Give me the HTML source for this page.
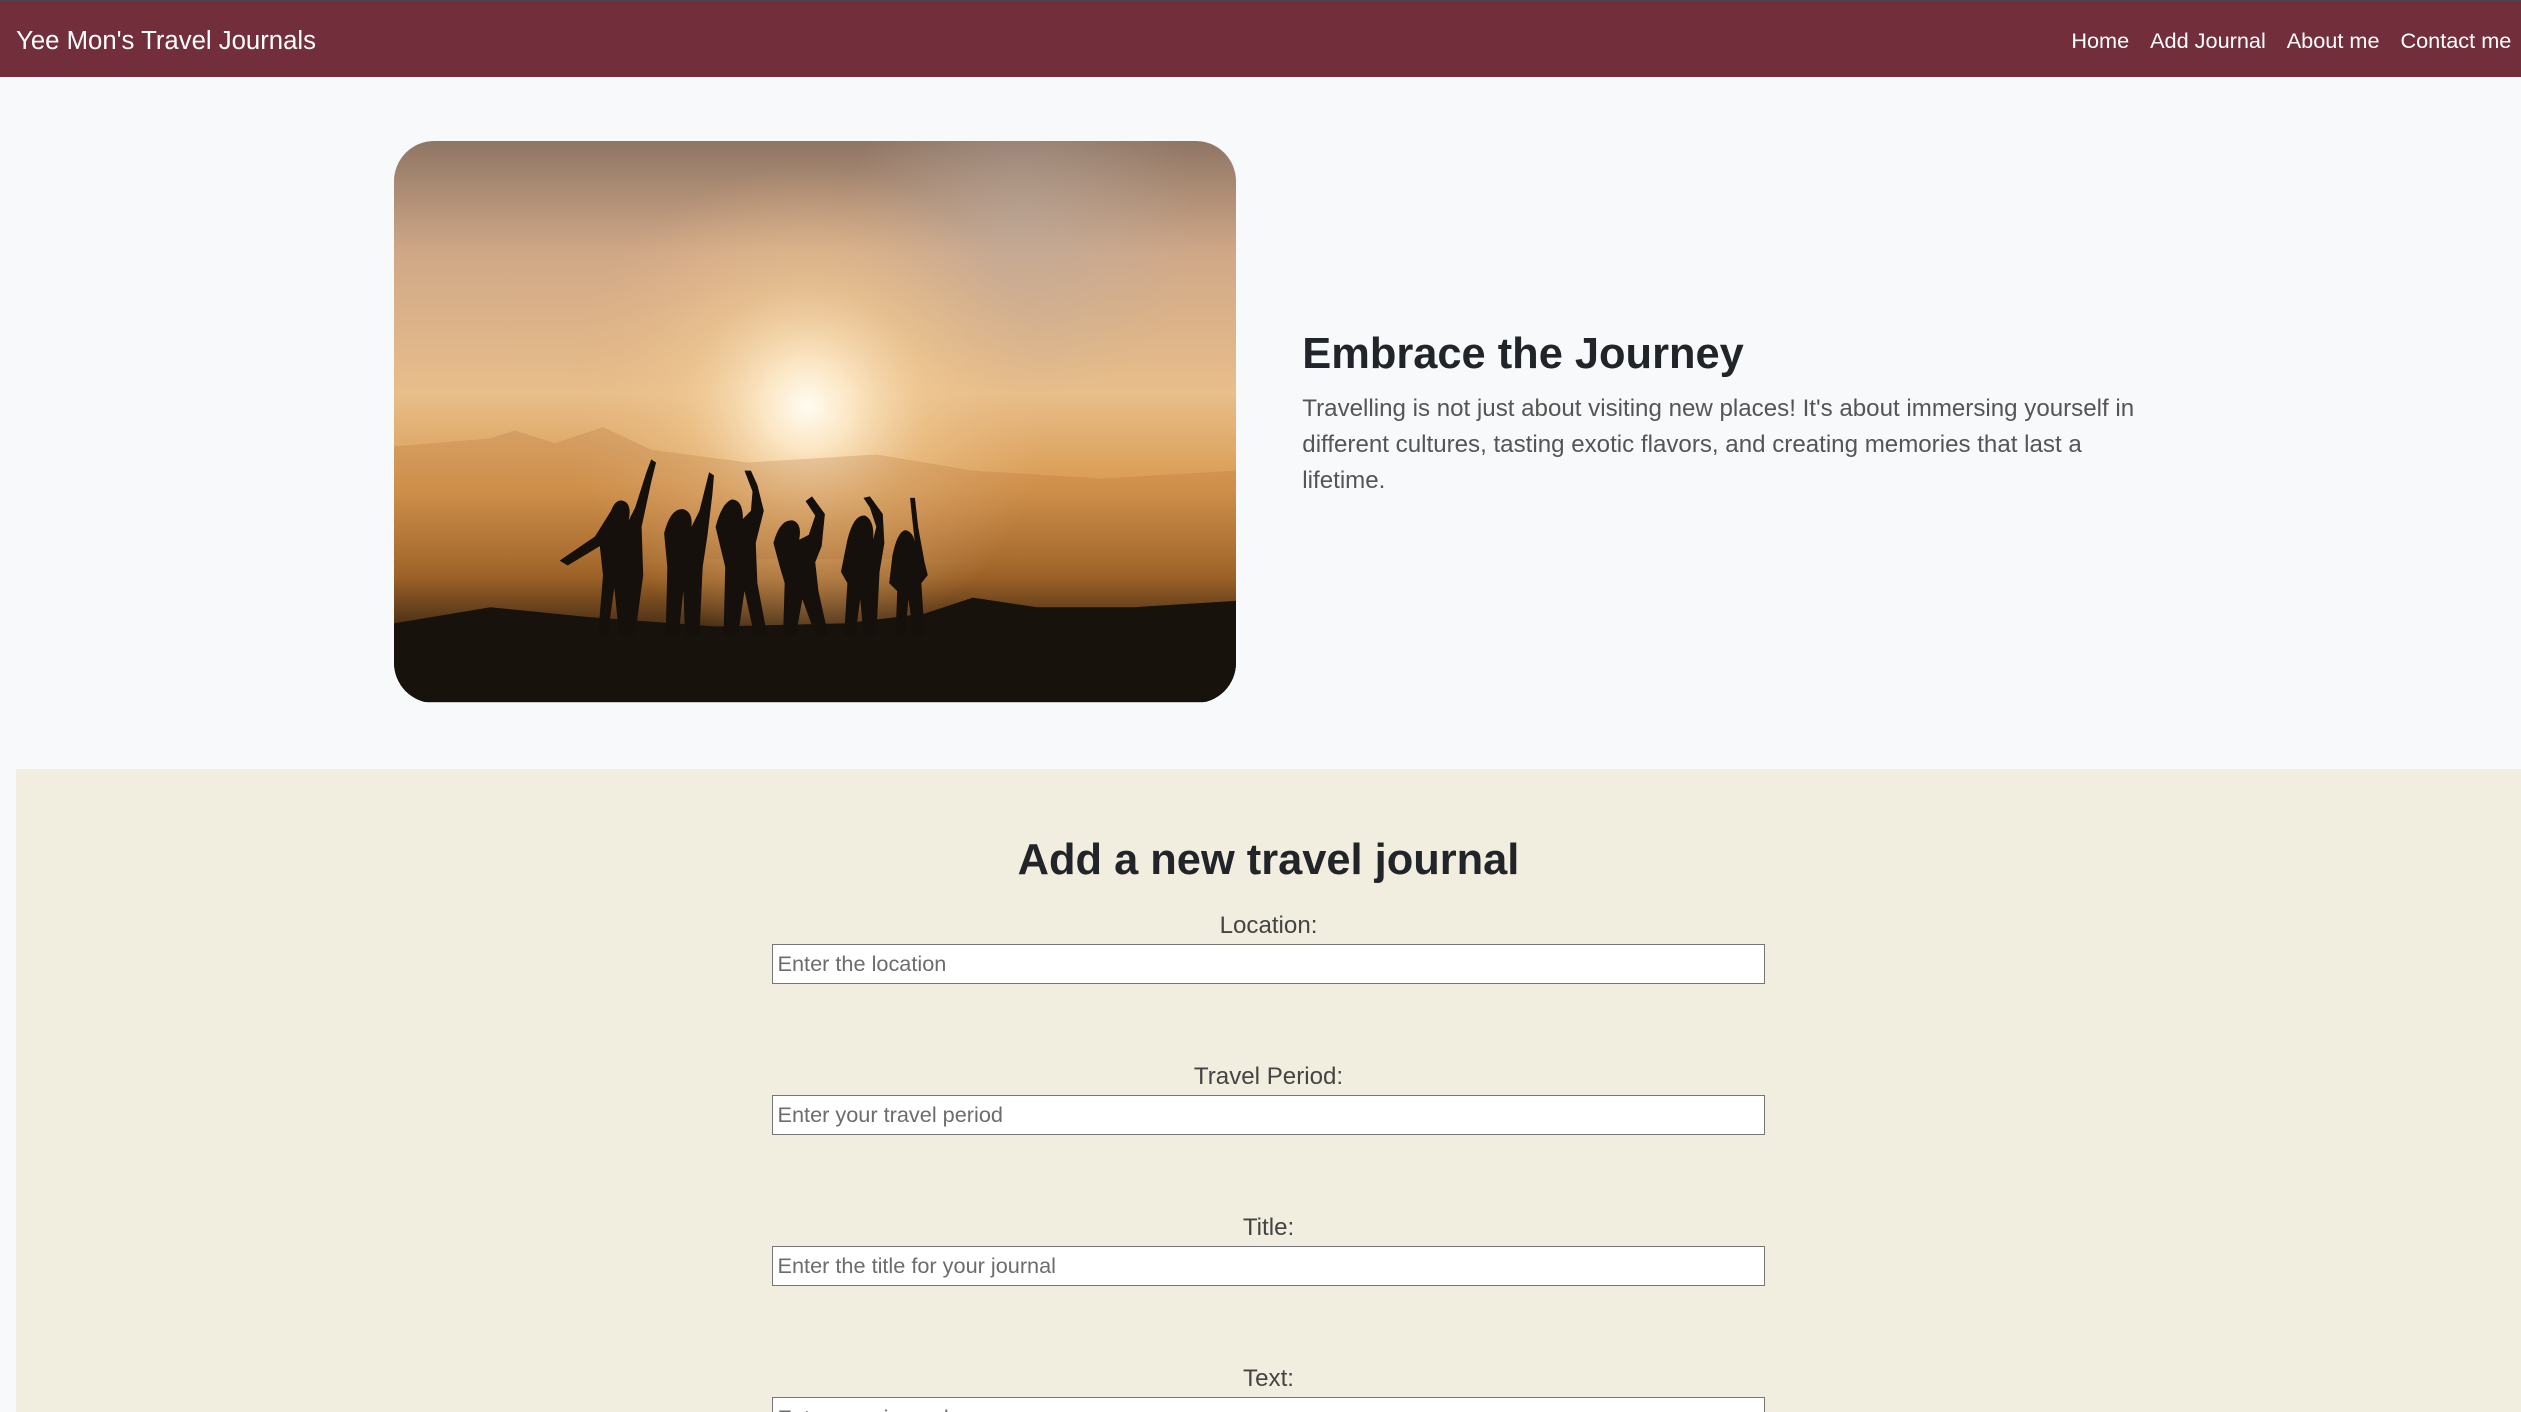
<!DOCTYPE html>
<html><head><meta charset="utf-8"><style>
html,body{margin:0;padding:0;background:#f8f9fa;overflow:hidden}
#w{width:1568px;height:878px;zoom:1.60778;position:relative;font-family:"Liberation Sans",sans-serif;background:#f8f9fa;overflow:hidden}
.nav{position:absolute;left:0;top:0;width:1568px;height:48px;background:#722e3a;border-top:1px solid #4a4450;box-sizing:border-box;color:#fff}
.brand{position:absolute;left:10px;top:16px;font-size:16px}
.links{position:absolute;right:6px;top:17px;font-size:13.5px}
.links span{margin-left:13px}
.img{position:absolute;left:245px;top:88px;width:524px;height:349px;border-radius:25px;overflow:hidden}
h1{position:absolute;left:810px;top:205px;margin:0;font-size:27px;font-weight:bold;color:#212529;font-family:"Liberation Sans",sans-serif}
.p{position:absolute;left:810px;top:243px;width:540px;font-size:15px;line-height:22.6px;color:#555}
.sec{position:absolute;left:10px;top:478px;width:1558px;height:400px;background:#f2eedf}
h2{position:absolute;left:0;width:1558px;text-align:center;top:42px;margin:0;font-size:27px;font-family:"Liberation Sans",sans-serif;color:#212529}
.lab{position:absolute;left:0;width:1558px;text-align:center;font-size:15px;color:#444}
.in{position:absolute;left:470px;width:618px;height:25px;box-sizing:border-box;background:#fff;border:1px solid #767676;font-size:13.5px;color:#6c6c6c;padding:4px 3px;font-family:"Liberation Sans",sans-serif}
</style></head><body><div id="w">
<div class="nav"><div class="brand">Yee Mon's Travel Journals</div><div class="links"><span>Home</span><span>Add Journal</span><span>About me</span><span>Contact me</span></div></div>
<div class="img"><svg width="524" height="349" viewBox="0 0 524 349">
<defs>
<linearGradient id="sky" x1="0" y1="0" x2="0" y2="1">
<stop offset="0" stop-color="#8f7564"/><stop offset="0.2" stop-color="#d0a888"/><stop offset="0.45" stop-color="#e8be8a"/><stop offset="0.62" stop-color="#d99a50"/><stop offset="0.78" stop-color="#9a6026"/><stop offset="0.9" stop-color="#2a1d10"/><stop offset="1" stop-color="#15110c"/></linearGradient>
<radialGradient id="sun" cx="257" cy="165" r="150" gradientUnits="userSpaceOnUse">
<stop offset="0" stop-color="#fffcf2"/><stop offset="0.18" stop-color="#fde9c8" stop-opacity="0.95"/><stop offset="0.5" stop-color="#f2cc96" stop-opacity="0.5"/><stop offset="1" stop-color="#e6b684" stop-opacity="0"/></radialGradient>
<radialGradient id="cl" cx="390" cy="50" r="110" gradientUnits="userSpaceOnUse"><stop offset="0" stop-color="#b8aca4" stop-opacity=".5"/><stop offset="1" stop-color="#b8aca4" stop-opacity="0"/></radialGradient>
</defs>
<rect width="524" height="349" fill="url(#sky)"/>
<rect width="524" height="349" fill="url(#cl)"/>
<rect width="524" height="349" fill="url(#sun)"/>
<path d="M0 190 L60 185 L75 180 L100 188 L130 178 L160 192 L220 200 L300 195 L360 205 L440 210 L524 205 L524 260 L0 260Z" fill="#b07038" opacity=".25"/>
<path d="M0 300 L60 290 L120 296 L200 302 L280 300 L330 294 L360 284 L400 290 L460 290 L524 286 L524 349 L0 349Z" fill="#17120c"/>
<g fill="#15100b">
<path d="M103 261 L125 246 L135 230 Q138 222 143 224 Q148 226 146 236 L150 228 L157 206 L160 198 L163 200 L160 212 L154 240 L155 270 L150 307 L140 307 L137 278 L133 307 L127 307 L130 270 L128 252 L108 264Z"/>
<path d="M168 244 Q172 228 180 229 Q186 231 185 240 L190 230 L194 214 L196 206 L199 208 L198 220 L195 245 L192 265 L190 307 L181 307 L180 280 L177 307 L169 307 L170 265Z"/>
<path d="M200 240 Q204 225 210 223 Q217 223 217 235 L222 230 L223 218 L218 205 L222 205 L226 214 L230 230 L225 250 L226 275 L232 307 L224 307 L218 280 L214 307 L205 307 L206 265Z"/>
<path d="M236 250 Q240 235 248 236 Q254 238 252 248 L258 245 L262 233 L256 224 L260 221 L268 232 L266 252 L262 262 L264 280 L270 307 L262 307 L254 285 L250 307 L242 307 L243 275 L240 265Z"/>
<path d="M282 248 Q286 232 293 233 Q299 236 298 248 L300 240 L296 228 L292 222 L296 221 L304 232 L305 250 L302 268 L300 307 L292 307 L290 285 L287 307 L280 307 L282 275 L278 268Z"/>
<path d="M310 258 Q313 243 318 242 Q323 243 324 250 L322 232 L321 222 L324 222 L326 240 L330 262 L332 270 L328 275 L330 307 L323 307 L320 285 L318 307 L312 307 L313 280 L308 275Z"/>
</g>
</svg></div>
<h1>Embrace the Journey</h1>
<div class="p">Travelling is not just about visiting new places! It's about immersing yourself in different cultures, tasting exotic flavors, and creating memories that last a lifetime.</div>
<div class="sec">
<h2>Add a new travel journal</h2>
<div class="lab" style="top:89px">Location:</div>
<div class="in" style="top:109px">Enter the location</div>
<div class="lab" style="top:183px">Travel Period:</div>
<div class="in" style="top:203px">Enter your travel period</div>
<div class="lab" style="top:277px">Title:</div>
<div class="in" style="top:297px">Enter the title for your journal</div>
<div class="lab" style="top:371px">Text:</div>
<div class="in" style="top:391px">Enter your journal</div>
</div>
</div></body></html>
